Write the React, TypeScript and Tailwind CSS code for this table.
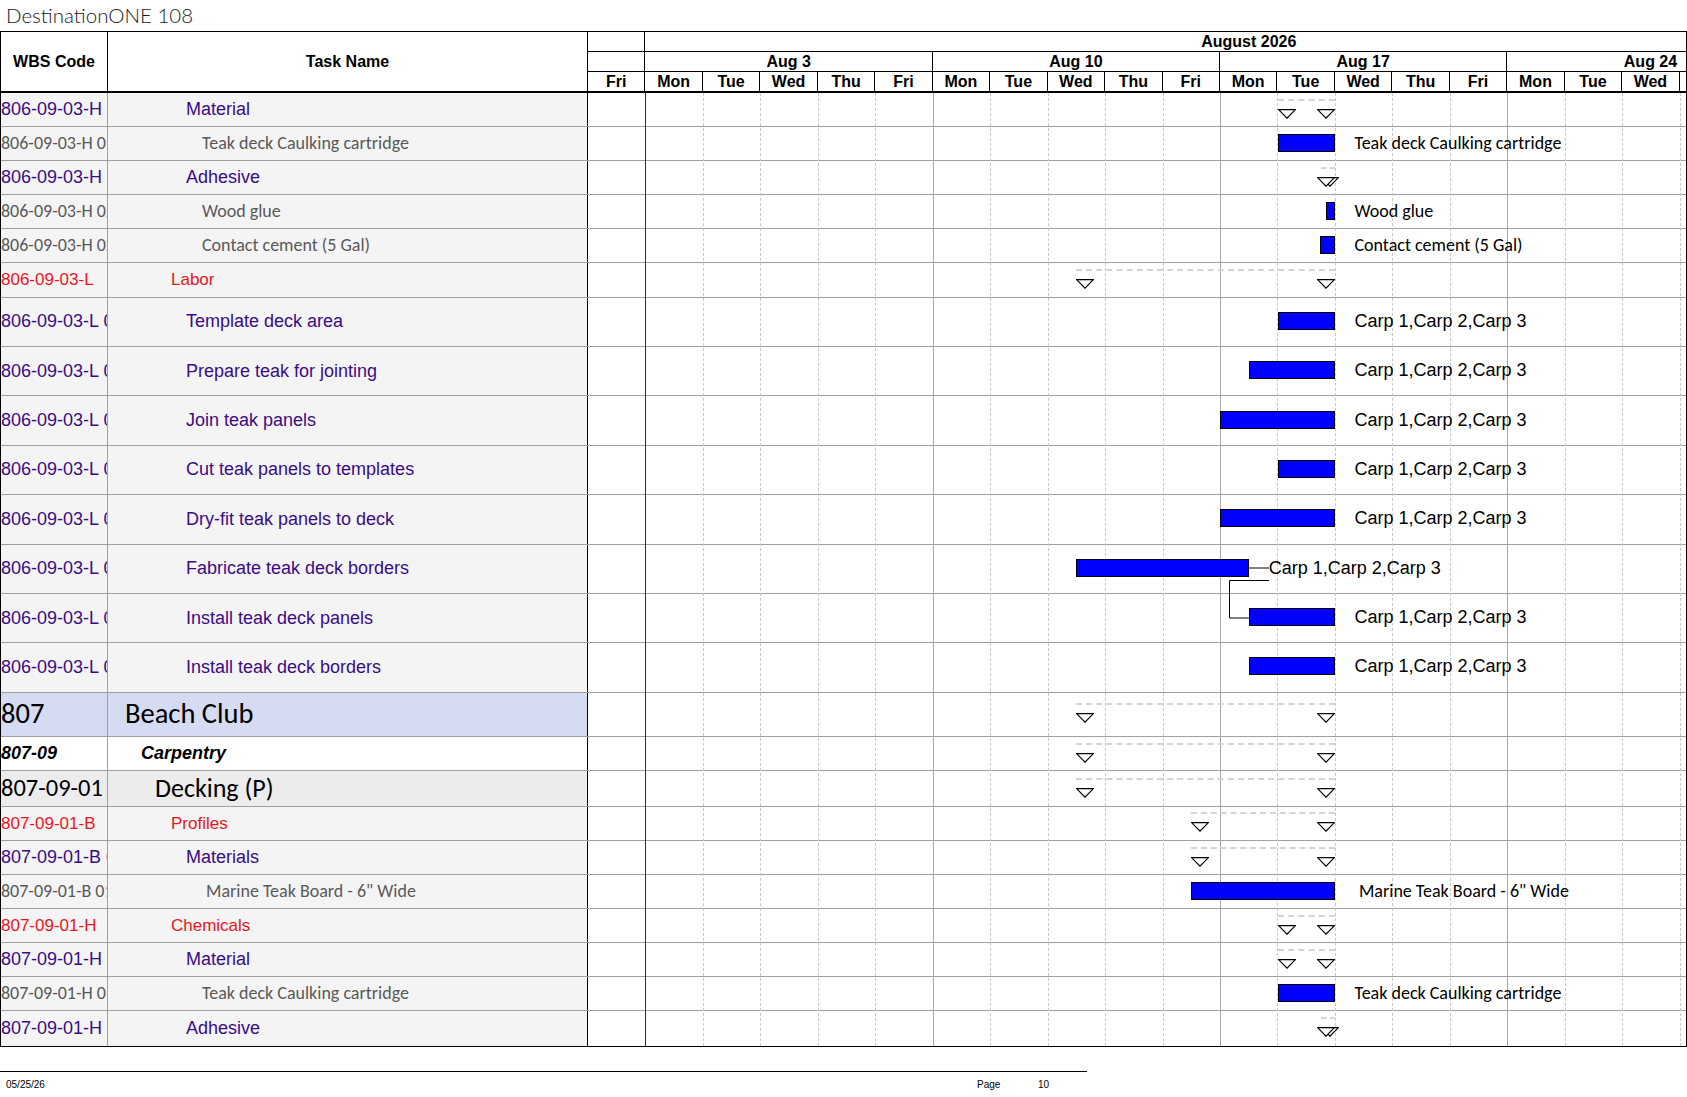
import React from 'react';

// one working day on the timeline
const D = 57.46;
// x inside the gantt cell; d = 0 is Mon Aug 3, d = -1 is Fri Jul 31
const px = (d: number) => (d + 1) * D;

type Kind = 'purple' | 'gray' | 'red' | 'l1' | 'l2' | 'l3';

interface Row {
  wbs: string;
  name: string;
  kind: Kind;
  h: string;
  bar?: [number, number];
  label?: string;
  labelCal?: boolean;
  labelGap?: number;
  sum?: [number, number];
  link?: boolean;
  indent?: string;
}

const ARIAL = "font-[family-name:'Liberation_Sans',Arial,sans-serif]";

const textStyle: Record<Kind, string> = {
  purple: "font-[family-name:'Liberation_Sans',Arial,sans-serif] text-[18px] text-[#3a0c85]",
  gray: 'font-[family-name:Carlito,Calibri,Lato,sans-serif] text-[18px] text-[#595959]',
  red: "font-[family-name:'Liberation_Sans',Arial,sans-serif] text-[17px] text-[#e8171d]",
  l1: 'font-[family-name:Carlito,Calibri,Lato,sans-serif] text-[28.5px] text-black',
  l2: "font-[family-name:'Liberation_Sans',Arial,sans-serif] text-[18px] font-bold italic text-black",
  l3: 'font-[family-name:Carlito,Calibri,Lato,sans-serif] text-[26px] text-black',
};

// the code column is narrow: the deepest heading code is set a touch smaller
const wbsStyle: Record<Kind, string> = {
  ...textStyle,
  l3: 'font-[family-name:Carlito,Calibri,Lato,sans-serif] text-[24.5px] text-black',
};

const indent: Record<Kind, string> = {
  purple: 'pl-[78px]',
  gray: 'pl-[94px]',
  red: 'pl-[63px]',
  l1: 'pl-[17px]',
  l2: 'pl-[33px]',
  l3: 'pl-[47px]',
};

const rowBg: Record<Kind, string> = {
  purple: 'bg-[#f4f4f4]',
  gray: 'bg-[#f4f4f4]',
  red: 'bg-[#f4f4f4]',
  l1: 'bg-[#d5dbf1]',
  l2: 'bg-white',
  l3: 'bg-[#ececec]',
};

const SM = 'h-[34.1px]';
const TALL = 'h-[49.4px]';
const CARP = 'Carp 1,Carp 2,Carp 3';

const rows: Row[] = [
  { wbs: '806-09-03-H 01', name: 'Material', kind: 'purple', h: SM, sum: [11, 12] },
  { wbs: '806-09-03-H 01.01', name: 'Teak deck Caulking cartridge', kind: 'gray', h: SM, bar: [11, 12], label: 'Teak deck Caulking cartridge', labelCal: true },
  { wbs: '806-09-03-H 02', name: 'Adhesive', kind: 'purple', h: SM, sum: [11.75, 12] },
  { wbs: '806-09-03-H 02.01', name: 'Wood glue', kind: 'gray', h: SM, bar: [11.85, 12], label: 'Wood glue', labelCal: true },
  { wbs: '806-09-03-H 02.02', name: 'Contact cement (5 Gal)', kind: 'gray', h: SM, bar: [11.74, 12], label: 'Contact cement (5 Gal)', labelCal: true },
  { wbs: '806-09-03-L', name: 'Labor', kind: 'red', h: SM, sum: [7.5, 12] },
  { wbs: '806-09-03-L 01', name: 'Template deck area', kind: 'purple', h: TALL, bar: [11, 12], label: CARP },
  { wbs: '806-09-03-L 02', name: 'Prepare teak for jointing', kind: 'purple', h: TALL, bar: [10.5, 12], label: CARP },
  { wbs: '806-09-03-L 03', name: 'Join teak panels', kind: 'purple', h: TALL, bar: [10, 12], label: CARP },
  { wbs: '806-09-03-L 04', name: 'Cut teak panels to templates', kind: 'purple', h: TALL, bar: [11, 12], label: CARP },
  { wbs: '806-09-03-L 05', name: 'Dry-fit teak panels to deck', kind: 'purple', h: TALL, bar: [10, 12], label: CARP },
  { wbs: '806-09-03-L 06', name: 'Fabricate teak deck borders', kind: 'purple', h: TALL, bar: [7.5, 10.5], label: CARP, link: true },
  { wbs: '806-09-03-L 07', name: 'Install teak deck panels', kind: 'purple', h: TALL, bar: [10.5, 12], label: CARP },
  { wbs: '806-09-03-L 08', name: 'Install teak deck borders', kind: 'purple', h: TALL, bar: [10.5, 12], label: CARP },
  { wbs: '807', name: 'Beach Club', kind: 'l1', h: 'h-[44.2px]', sum: [7.5, 12] },
  { wbs: '807-09', name: 'Carpentry', kind: 'l2', h: 'h-[34.4px]', sum: [7.5, 12] },
  { wbs: '807-09-01', name: 'Decking (P)', kind: 'l3', h: 'h-[35.6px]', sum: [7.5, 12] },
  { wbs: '807-09-01-B', name: 'Profiles', kind: 'red', h: SM, sum: [9.5, 12] },
  { wbs: '807-09-01-B 01', name: 'Materials', kind: 'purple', h: SM, sum: [9.5, 12] },
  { wbs: '807-09-01-B 01.01', name: 'Marine Teak Board - 6" Wide', kind: 'gray', h: SM, bar: [9.5, 12], label: 'Marine Teak Board - 6" Wide', labelCal: true, labelGap: 24, indent: 'pl-[98px]' },
  { wbs: '807-09-01-H', name: 'Chemicals', kind: 'red', h: SM, sum: [11, 12] },
  { wbs: '807-09-01-H 01', name: 'Material', kind: 'purple', h: SM, sum: [11, 12] },
  { wbs: '807-09-01-H 01.01', name: 'Teak deck Caulking cartridge', kind: 'gray', h: SM, bar: [11, 12], label: 'Teak deck Caulking cartridge', labelCal: true },
  { wbs: '807-09-01-H 02', name: 'Adhesive', kind: 'purple', h: SM, sum: [11.75, 12] },
];

const weeks = ['Aug 3', 'Aug 10', 'Aug 17', 'Aug 24'];
const dayNames = ['Fri', 'Mon', 'Tue', 'Wed', 'Thu', 'Fri', 'Mon', 'Tue', 'Wed', 'Thu', 'Fri', 'Mon', 'Tue', 'Wed', 'Thu', 'Fri', 'Mon', 'Tue', 'Wed', 'Thu', 'Fri'];

function Tri({ left }: { left: number }) {
  return (
    <svg
      className="absolute top-1/2 -mt-[1px]"
      style={{ left }}
      width="18"
      height="10"
      viewBox="0 0 18 10"
    >
      <polygon points="0.6,0.6 17.4,0.6 9,9.2" fill="white" stroke="black" strokeWidth="1.2" />
    </svg>
  );
}

function GanttCell({ r }: { r: Row }) {
  return (
    <div className="relative flex-1">
      {r.sum && (
        <>
          <div
            className="absolute top-1/2 -mt-[11px] border-t-2 border-dashed border-[#d4d4d4]"
            style={{ left: px(r.sum[0]), width: px(r.sum[1]) - px(r.sum[0]) }}
          />
          <Tri left={px(r.sum[0])} />
          <Tri left={px(r.sum[1]) - 18} />
        </>
      )}
      {r.bar && (
        <div
          className="absolute top-1/2 -mt-[10px] h-[18px] bg-[#0000ff] border border-black"
          style={{ left: px(r.bar[0]), width: px(r.bar[1]) - px(r.bar[0]) }}
        />
      )}
      {r.bar && r.label && (
        <div
          className={`absolute top-1/2 -translate-y-1/2 -mt-[1px] whitespace-nowrap text-black leading-none ${
            r.labelCal ? 'font-[family-name:Carlito,Calibri,Lato,sans-serif] text-[18px]' : "font-[family-name:'Liberation_Sans',Arial,sans-serif] text-[18px]"
          }`}
          style={{ left: px(r.bar[1]) + (r.labelGap ?? (r.link ? 20 : 19.5)) }}
        >
          {r.label}
        </div>
      )}
      {r.bar && r.link && (
        <svg
          className="absolute top-1/2 overflow-visible"
          style={{ left: px(r.bar[1]) - 20 }}
          width="42"
          height="52"
          viewBox="0 0 42 52"
        >
          <path d="M20 -1 H40" stroke="black" strokeWidth="1" fill="none" />
          <path d="M40 11.5 H0.5 V49 H20" stroke="black" strokeWidth="1" fill="none" />
        </svg>
      )}
    </div>
  );
}

function gridLine(k: number) {
  if (k === 0) return 'w-[57.46px] shrink-0 h-full border-l border-[#1c1ca8]';
  if (k % 5 === 0) return 'w-[57.46px] shrink-0 h-full border-l border-[#a8a8a8]';
  return 'w-[57.46px] shrink-0 h-full border-l border-dashed border-[#c8c8c8]';
}

export default function App() {
  return (
    <div className={`w-[1687px] h-[1097px] bg-white overflow-hidden ${ARIAL}`}>
      <div className="h-[30px] pl-[6px] flex items-center font-[family-name:Lato,sans-serif] font-light text-[20.5px] text-[#1a1a1a]">
        DestinationONE 108
      </div>

      <div className="mt-[1px] border border-black overflow-hidden">
        {/* header */}
        <div className="flex h-[61px] border-b-2 border-black text-[16px] font-bold text-black">
          <div className="w-[107px] shrink-0 border-r border-black flex items-center justify-center">WBS Code</div>
          <div className="w-[480px] shrink-0 border-r border-black flex items-center justify-center">Task Name</div>
          <div className="flex-1 overflow-hidden flex flex-col leading-none">
            <div className="flex h-[20px] shrink-0 border-b border-black">
              <div className="w-[57.46px] shrink-0 border-r border-black" />
              <div className="w-[1206.66px] shrink-0 flex items-center justify-center">August 2026</div>
            </div>
            <div className="flex h-[20px] shrink-0 border-b border-black">
              <div className="w-[57.46px] shrink-0 border-r border-black" />
              {weeks.map((w) => (
                <div key={w} className="w-[287.3px] shrink-0 border-r border-black flex items-center justify-center">
                  {w}
                </div>
              ))}
            </div>
            <div className="flex flex-1">
              {dayNames.map((d, i) => (
                <div key={i} className="w-[57.46px] shrink-0 border-r border-black flex items-center justify-center">
                  {d}
                </div>
              ))}
            </div>
          </div>
        </div>

        {/* body */}
        <div className="relative">
          <div className="absolute top-0 bottom-0 left-[587px] right-0 flex overflow-hidden pointer-events-none">
            <div className="w-[57.46px] shrink-0" />
            {Array.from({ length: 20 }, (_, k) => (
              <div key={k} className={gridLine(k)} />
            ))}
          </div>

          {rows.map((r, i) => (
            <div
              key={i}
              className={`flex ${r.h} ${i === rows.length - 1 ? '' : 'border-b border-[#a0a0a0]'}`}
            >
              <div
                className={`w-[107px] shrink-0 border-r border-[#a0a0a0] flex items-center overflow-hidden whitespace-nowrap ${rowBg[r.kind]} ${wbsStyle[r.kind]}`}
              >
                {r.wbs}
              </div>
              <div
                className={`w-[480px] shrink-0 border-r border-black flex items-center overflow-hidden whitespace-nowrap ${rowBg[r.kind]} ${textStyle[r.kind]} ${r.indent ?? indent[r.kind]}`}
              >
                {r.name}
              </div>
              <GanttCell r={r} />
            </div>
          ))}
        </div>
      </div>

      {/* footer */}
      <div className="mt-[24px] w-[1087px] border-t border-black">
        <div className="flex pt-[8px] text-[10px] leading-none text-black font-[family-name:'Liberation_Sans_Narrow','Liberation_Sans',sans-serif]">
          <span className="w-[977px] pl-[6px] shrink-0">05/25/26</span>
          <span className="w-[61px] shrink-0">Page</span>
          <span>10</span>
        </div>
      </div>
    </div>
  );
}
